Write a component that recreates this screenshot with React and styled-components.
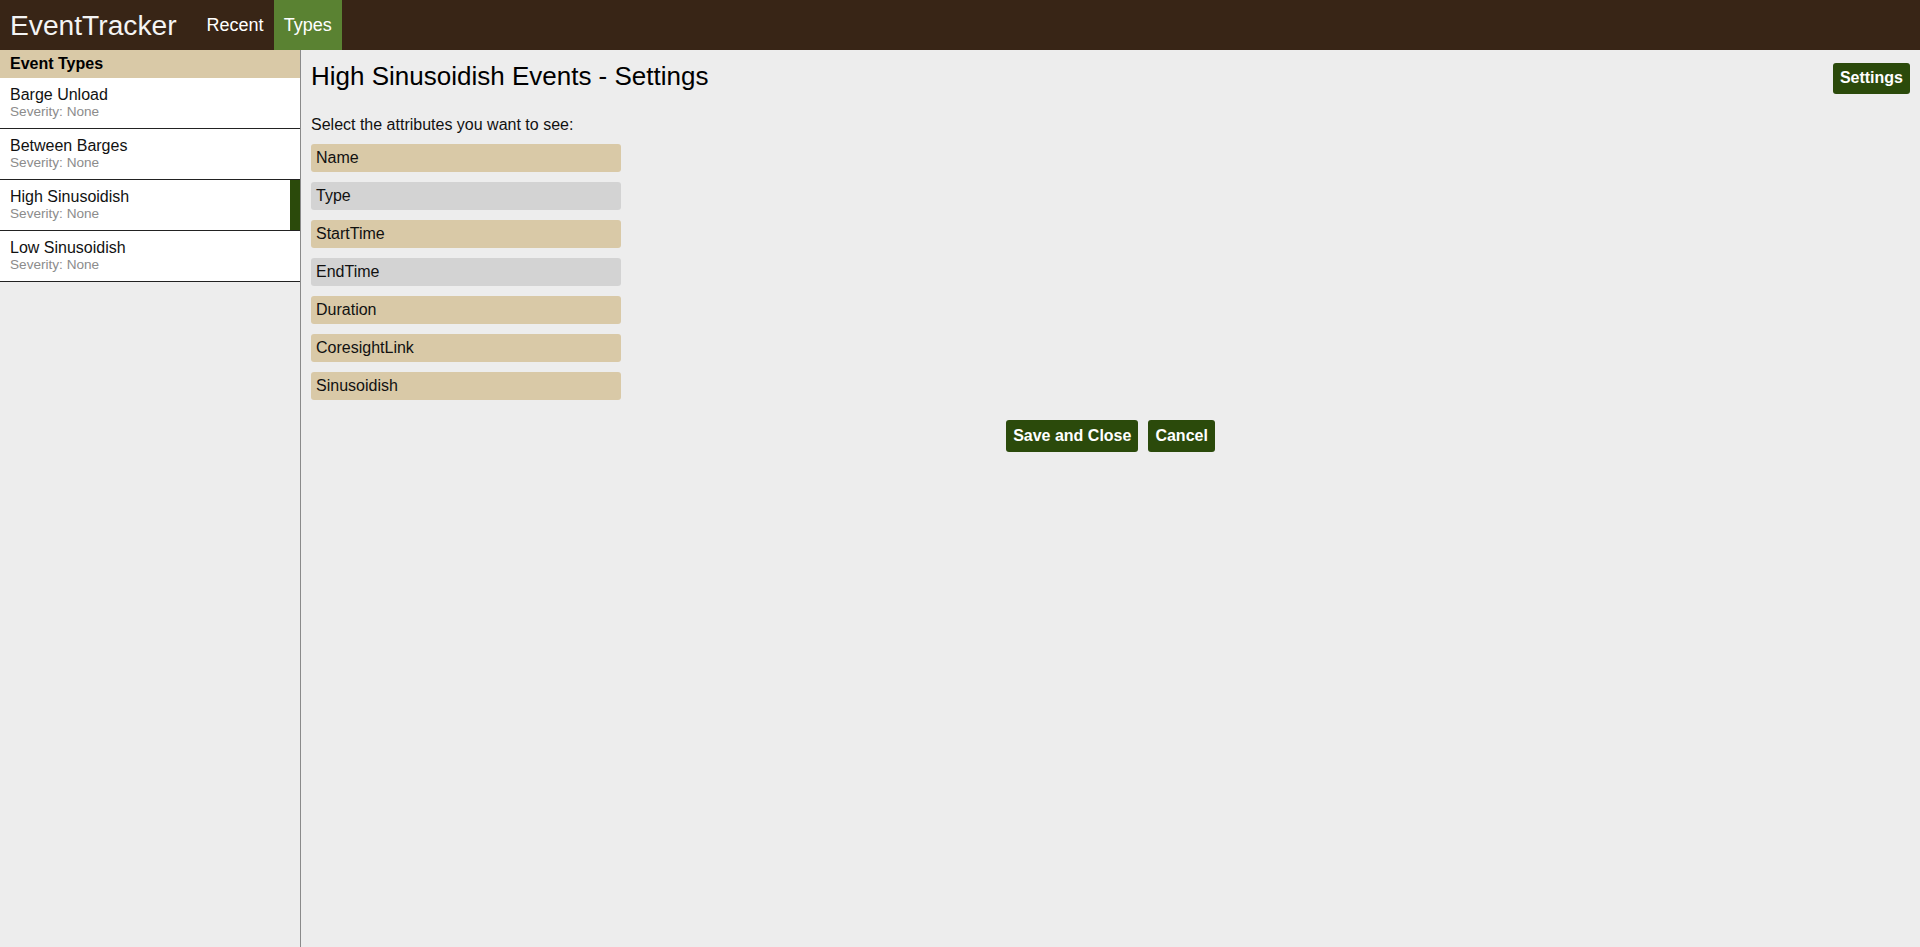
import React, { useState } from "react";
import styled, { createGlobalStyle } from "styled-components";

const EVENT_TYPES = [
  { name: "Barge Unload", severity: "None" },
  { name: "Between Barges", severity: "None" },
  { name: "High Sinusoidish", severity: "None" },
  { name: "Low Sinusoidish", severity: "None" },
];

const ATTRIBUTES = [
  { name: "Name", selected: true },
  { name: "Type", selected: false },
  { name: "StartTime", selected: true },
  { name: "EndTime", selected: false },
  { name: "Duration", selected: true },
  { name: "CoresightLink", selected: true },
  { name: "Sinusoidish", selected: true },
];

const GlobalStyle = createGlobalStyle`
  html, body {
    margin: 0;
    padding: 0;
    height: 100%;
  }
  body {
    font-family: "Liberation Sans", Arial, sans-serif;
    background: #ededed;
    color: #111;
  }
  #root {
    height: 100%;
  }
`;

const App = () => {
  const [activeType, setActiveType] = useState("High Sinusoidish");
  const [attributes, setAttributes] = useState(ATTRIBUTES);

  const toggleAttribute = (name) => {
    setAttributes((prev) =>
      prev.map((a) => (a.name === name ? { ...a, selected: !a.selected } : a))
    );
  };

  return (
    <>
      <GlobalStyle />
      <PageWrapper>
        <TopBar>
          <Logo>EventTracker</Logo>
          <NavItem>Recent</NavItem>
          <NavItem active>Types</NavItem>
        </TopBar>
        <Body>
          <Sidebar>
            <SidebarTitle>Event Types</SidebarTitle>
            {EVENT_TYPES.map((t) => (
              <TypeItem
                key={t.name}
                active={t.name === activeType}
                onClick={() => setActiveType(t.name)}
              >
                <TypeName>{t.name}</TypeName>
                <TypeSeverity>Severity: {t.severity}</TypeSeverity>
              </TypeItem>
            ))}
          </Sidebar>
          <Main>
            <HeaderRow>
              <PageTitle>{activeType} Events - Settings</PageTitle>
              <SettingsButton>Settings</SettingsButton>
            </HeaderRow>
            <Prompt>Select the attributes you want to see:</Prompt>
            <AttributeList>
              {attributes.map((a) => (
                <Attribute
                  key={a.name}
                  selected={a.selected}
                  onClick={() => toggleAttribute(a.name)}
                >
                  {a.name}
                </Attribute>
              ))}
            </AttributeList>
            <ButtonRow>
              <ActionButton>Save and Close</ActionButton>
              <ActionButton>Cancel</ActionButton>
            </ButtonRow>
          </Main>
        </Body>
      </PageWrapper>
    </>
  );
};

const PageWrapper = styled.div`
  display: flex;
  flex-direction: column;
  height: 100%;
`;

const TopBar = styled.div`
  display: flex;
  align-items: stretch;
  height: 50px;
  padding-left: 10px;
  background: #382516;
  flex-shrink: 0;
`;

const Logo = styled.div`
  display: flex;
  align-items: center;
  font-size: 28.2px;
  color: #f4f4f4;
  margin-right: 20px;
`;

const NavItem = styled.div`
  display: flex;
  align-items: center;
  padding: 0 10px;
  font-size: 18px;
  color: #fff;
  background: ${(p) => (p.active ? "#5a8232" : "transparent")};
  cursor: pointer;
`;

const Body = styled.div`
  display: flex;
  flex: 1;
  min-height: 0;
`;

const Sidebar = styled.div`
  width: 300px;
  flex-shrink: 0;
  border-right: 1px solid #8a8a8a;
  background: #ededed;
`;

const SidebarTitle = styled.div`
  height: 28px;
  line-height: 28px;
  padding: 0 10px;
  font-size: 16px;
  font-weight: bold;
  background: #d9c9a7;
  color: #000;
`;

const TypeItem = styled.div`
  box-sizing: border-box;
  height: 51px;
  padding: 8px 10px 0;
  background: #fff;
  border-bottom: 1px solid #222;
  box-shadow: ${(p) => (p.active ? "inset -10px 0 0 #2b4a0b" : "none")};
  cursor: pointer;
`;

const TypeName = styled.div`
  font-size: 16px;
  color: #111;
`;

const TypeSeverity = styled.div`
  font-size: 13.6px;
  color: #8c8c8c;
`;

const Main = styled.div`
  flex: 1;
  padding: 8px 10px;
  display: flex;
  flex-direction: column;
`;

const HeaderRow = styled.div`
  display: flex;
  justify-content: space-between;
  align-items: flex-start;
`;

const PageTitle = styled.h1`
  margin: 3px 0 0;
  font-size: 26px;
  font-weight: normal;
  color: #000;
`;

const ActionButton = styled.button`
  font-family: "Liberation Sans", Arial, sans-serif;
  font-size: 16px;
  font-weight: bold;
  color: #fff;
  background: #2b4a0b;
  border: none;
  border-radius: 3px;
  padding: 7px 7px;
  line-height: 18px;
  cursor: pointer;
`;

const SettingsButton = styled(ActionButton)`
  margin-top: 5px;
  padding: 6px 7px 7px;
`;

const Prompt = styled.p`
  margin: 21.5px 0 10px;
  font-size: 16px;
  color: #111;
`;

const AttributeList = styled.div`
  display: flex;
  flex-direction: column;
  gap: 10px;
  width: 310px;
`;

const Attribute = styled.div`
  height: 28px;
  line-height: 28px;
  padding: 0 5px;
  border-radius: 3px;
  font-size: 16px;
  color: #111;
  background: ${(p) => (p.selected ? "#d9c9a7" : "#d3d3d3")};
  cursor: pointer;
`;

const ButtonRow = styled.div`
  display: flex;
  justify-content: center;
  gap: 10px;
  margin-top: 20px;
`;

export default App;
